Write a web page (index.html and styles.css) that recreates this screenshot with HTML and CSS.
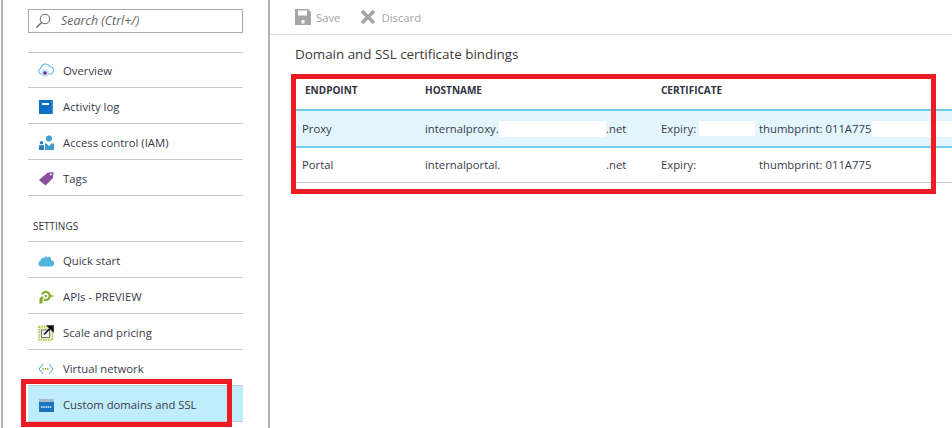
FILE: index.html
```html
<!DOCTYPE html>
<html lang="en">
<head>
<meta charset="utf-8">
<title>Custom domains and SSL</title>
<link rel="stylesheet" href="styles.css">
</head>
<body>
<div class="app">
  <aside class="sidebar">
    <div class="search">
      <svg class="search-icon" viewBox="0 0 16 16" width="16" height="16"><circle cx="10" cy="6" r="4.8" fill="none" stroke="#666" stroke-width="1"/><path d="M6.600 9.400 1.500 14.500" stroke="#666" stroke-width="1.400" fill="none"/></svg>
      <span class="search-text">Search (Ctrl+/)</span>
    </div>
    <ul class="menu menu-top">
      <li class="item item-first"><svg class="icon" viewBox="0 0 16 16"><path d="M3.500 12a2.800 2.800 0 0 1-.7-5.500A4.800 4.800 0 0 1 11.800 4.500 3.800 3.800 0 0 1 12.500 12z" fill="#fff" stroke="#5ebee4" stroke-width="1.100"/><circle cx="7" cy="11" r="3.800" fill="#bfe6f5"/><circle cx="7" cy="11" r="1.800" fill="#7d2a8c"/></svg>Overview</li>
      <li class="item"><svg class="icon" viewBox="0 0 16 16"><rect x="1" y="1" width="14" height="14" fill="#0a6fc2"/><rect x="13.500" y="1" width="1.500" height="14" fill="#3a8fd2"/><rect x="4" y="4" width="7" height="2" fill="#fff"/></svg>Activity log</li>
      <li class="item"><svg class="icon" viewBox="0 0 16 16"><circle cx="11" cy="3.500" r="3" fill="#3c9ed0"/><path d="M7 8.500h1.500l2.500 2.500 2.500-2.500H16V15H7z" fill="#3c9ed0"/><circle cx="3.500" cy="7.700" r="1.800" fill="#2b80ba"/><rect x="1" y="10.200" width="5" height="4.800" fill="#2b80ba"/></svg>Access control (IAM)</li>
      <li class="item"><svg class="icon" viewBox="0 0 16 16"><path d="M9.500 1.800 15.500 1l-.5 6-7.500 7.500L1 9z" fill="#8a4f9f"/><circle cx="12.800" cy="3.500" r="1" fill="#fff"/></svg>Tags</li>
    </ul>
    <div class="section-label">SETTINGS</div>
    <ul class="menu">
      <li class="item"><svg class="icon" viewBox="0 0 16 16"><path d="M3.500 13.500a3 3 0 0 1-.8-5.900A3.500 3.500 0 0 1 7 4.500l1-2 1.200 2.300 1.600-1.300A3.400 3.400 0 0 1 13 7.300a3.100 3.100 0 0 1 0 6.200z" fill="#4fb3dc"/></svg>Quick start</li>
      <li class="item"><svg class="icon" viewBox="0 0 16 16"><path d="M1.500 15V9.500l2.500-2.500 2 2-1.500 1.500V14z" fill="#7fae2b"/><path d="M6 10.500a4 4 0 1 0-2-5" fill="none" stroke="#7fae2b" stroke-width="2.200"/><circle cx="7.800" cy="7" r="1.300" fill="#7fae2b"/><rect x="11.500" y="6.200" width="3.500" height="1.600" fill="#7fae2b"/></svg>APIs - PREVIEW</li>
      <li class="item"><svg class="icon" viewBox="0 0 16 16"><rect x="1" y="1.500" width="13.500" height="13.500" fill="#e4eebc" stroke="#a6c83c" stroke-width="1.500" stroke-dasharray="1.500 1"/><rect x="3.500" y="5" width="8" height="7.500" fill="#f4f4f4" stroke="#777" stroke-width="1"/><path d="M6 9.500 14 1.500M10 1h5v5z" stroke="#111" stroke-width="1.600" fill="#111"/></svg>Scale and pricing</li>
      <li class="item"><svg class="icon" viewBox="0 0 16 16"><path d="M5 3 1 8l4 5M11 3l4 5-4 5" fill="none" stroke="#3fa6de" stroke-width="1"/><path d="M4.500 8h7" stroke="#6fb000" stroke-width="1.400" stroke-dasharray="1.300 1"/></svg>Virtual network</li>
      <li class="item item-selected"><svg class="icon" viewBox="0 0 16 16"><rect x="1" y="2" width="15" height="13" fill="#1a73bd"/><rect x="1" y="2" width="15" height="3" fill="#a9b8c4"/><path d="M3 10h11" stroke="#b5d8f0" stroke-width="2" stroke-dasharray="1.500 .7"/></svg>Custom domains and SSL</li>
    </ul>
  </aside>
  <main class="content">
    <div class="toolbar">
      <span class="tool"><svg class="tool-icon" viewBox="0 0 16 16"><path d="M0 0h13l3 3v13H0z" fill="#a6a6a6"/><rect x="3" y="1.500" width="9" height="5" fill="#fff"/><rect x="6.500" y="11" width="3" height="3.500" fill="#fff"/></svg>Save</span>
      <span class="tool"><svg class="tool-icon" viewBox="0 0 16 16"><path d="M2 2 14 14M14 2 2 14" stroke="#a6a6a6" stroke-width="3.600" fill="none"/></svg>Discard</span>
    </div>
    <h1 class="title">Domain and SSL certificate bindings</h1>
    <div class="table">
      <div class="row row-head"><span>ENDPOINT</span><span>HOSTNAME</span><span>CERTIFICATE</span></div>
      <div class="row row-selected"><span>Proxy</span><span class="host">internalproxy.<span class="tld">.net</span></span><span class="cert"><span class="expiry">Expiry:</span><span>thumbprint: 011A775</span></span></div>
      <div class="row row-plain"><span>Portal</span><span class="host">internalportal.<span class="tld">.net</span></span><span class="cert"><span class="expiry">Expiry:</span><span>thumbprint: 011A775</span></span></div>
    </div>
  </main>
</div>
<div class="redact redact-host"></div>
<div class="redact redact-expiry"></div>
<div class="redact redact-thumb"></div>
<div class="callout callout-side"></div>
<div class="callout callout-table"></div>
</body>
</html>
```
FILE: styles.css
```css
* { box-sizing: border-box; }
html, body { margin: 0; height: 100%; overflow: hidden; background: #fff; }
body { font-family: "Open Sans", "Noto Sans", sans-serif; font-size: 11.3px; color: #3a3a4a; position: relative; }
.app { display: flex; height: 428px; }
.sidebar { width: 269px; flex: none; padding: 9px 25px 0 25px; border-left: 2px solid #b3b3b3; border-right: 2px solid #b3b3b3; margin-left: 1px; }
.search { height: 24px; width: 215px; border: 1px solid #a8a8a8; display: flex; align-items: center; padding-left: 6px; padding-bottom: 1px; }
.search-icon { flex: none; margin-right: 10px; }
.search-text { font-style: italic; color: #666; font-size: 12.4px; }
.menu { list-style: none; margin: 0; padding: 0; width: 215px; border-top: 1px solid #c8c8c8; }
.menu-top { margin-top: 19px; }
.item { height: 36px; border-bottom: 1px solid #c8c8c8; display: flex; align-items: center; padding: 2px 0 0 10px; }
.item-first { height: 35px; padding-top: 0; }
.icon { width: 16px; height: 16px; flex: none; margin-right: 9px; }
.item-selected { background: #bfedfb; }
.section-label { font-size: 10px; margin-top: 23px; height: 22px; padding-left: 5px; color: #333; }
.content { flex: 1; min-width: 0; }
.toolbar { height: 35px; border-bottom: 1px solid #e2e2e2; display: flex; align-items: center; gap: 20px; padding-left: 25px; color: #a6a6a6; }
.tool { display: flex; align-items: center; gap: 5px; }
.tool-icon { width: 16px; height: 16px; }
.title { font-size: 13.4px; font-weight: 400; margin: 9px 0 0 25px; line-height: 20px; color: #3a3a3a; }
.table { margin: 7px 0 0 26px; }
.row { display: grid; grid-template-columns: 123px 236px 1fr; align-items: center; height: 36px; padding-left: 6px; }
.row-head { height: 40px; padding: 0 0 1px 9px; grid-template-columns: 120px 236px 1fr; font-size: 10px; font-weight: 700; color: #33333f; border-bottom: 2px solid #6fcbe6; }
.row-selected { background: #e3f6fd; border-bottom: 2px solid #6fcbe6; height: 37px; }
.row-plain { border-bottom: 1px solid #c8c8c8; height: 35px; padding-bottom: 2px; }
.host { position: relative; }
.tld { position: absolute; left: 181px; top: 0; }
.cert { display: flex; }
.expiry { width: 98px; }
.redact { position: absolute; background: #fff; }
.redact-host { left: 499px; top: 121px; width: 107px; height: 16px; }
.redact-expiry { left: 699px; top: 121px; width: 56px; height: 15px; }
.redact-thumb { left: 872px; top: 121px; width: 80px; height: 16px; }
.callout { position: absolute; border: 5px solid #ed1c24; }
.callout-side { left: 21px; top: 379px; width: 211px; height: 48px; }
.callout-table { left: 291px; top: 74px; width: 645px; height: 120px; }
```
